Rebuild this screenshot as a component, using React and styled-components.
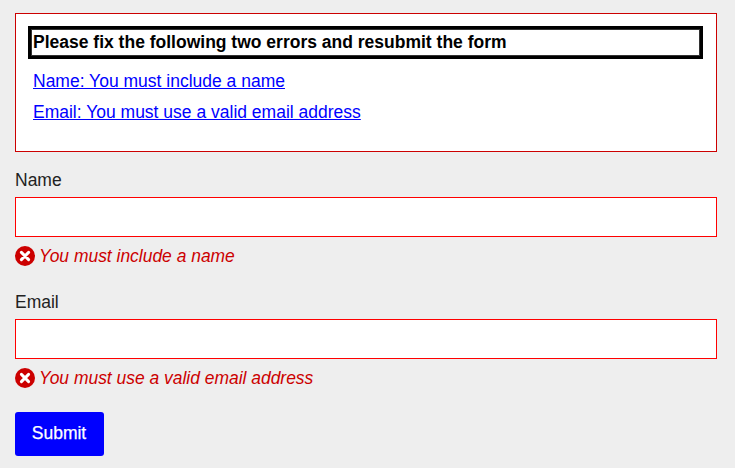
import React from "react";
import styled, { createGlobalStyle } from "styled-components";

const GlobalStyle = createGlobalStyle`
  *, *::before, *::after { box-sizing: border-box; }
  body {
    margin: 0;
    background: #fff;
    font-family: "Liberation Sans", Arial, Helvetica, sans-serif;
    font-size: 17.5px;
    line-height: 20px;
    color: #222;
  }
`;

const Page = styled.main`
  width: 735px;
  height: 468px;
  padding: 13px 18px 0 15px;
  background: #eee;
`;

const ErrorSummary = styled.section`
  height: 139px;
  padding: 12px 13px 0 12px;
  border: 1px solid #c00;
  background: #fff;
`;

const SummaryTitle = styled.h2`
  margin: 0;
  height: 33px;
  padding: 3px 2px;
  border: 3px solid #000;
  box-shadow: inset 0 0 0 1px #333;
  color: #000;
  font-size: 17.5px;
  line-height: 20px;
  white-space: nowrap;
`;

const ErrorList = styled.ul`
  display: flex;
  flex-direction: column;
  align-items: flex-start;
  gap: 11px;
  margin: 12px 0 0 5px;
  padding: 0;
  list-style: none;
`;

const ErrorLink = styled.a`
  display: block;
  color: #00f;
  text-decoration: underline;
  text-decoration-thickness: 1px;
  text-underline-offset: 1px;
  text-decoration-skip-ink: none;
  white-space: nowrap;
`;

const Field = styled.div`
  display: flex;
  flex-direction: column;
  height: 122px;
`;

const Form = styled.form`
  padding-top: 18px;
`;

const Label = styled.label`
  height: 27px;
`;

const TextInput = styled.input`
  width: 100%;
  height: 40px;
  padding: 0 8px;
  border: 1px solid #f00;
  border-radius: 0;
  background: #fff;
  font: inherit;
  outline: none;
`;

const ErrorMessage = styled.p`
  display: flex;
  gap: 4px;
  margin: 9px 0 0;
  color: #c00;
  font-size: 17.45px;
  font-style: italic;
`;

const SubmitButton = styled.button`
  display: block;
  width: 89px;
  height: 44px;
  margin-top: -2px;
  padding: 0 1px 2px 0;
  border: 0;
  border-radius: 3px;
  background: #00f;
  color: #fff;
  font: inherit;
  -webkit-text-stroke: 0.25px #fff;
`;

const ErrorIcon = () => (
  <svg width="20" height="20" viewBox="0 0 20 20" aria-hidden="true">
    <circle cx="10" cy="10" r="10" fill="#c00" />
    <path
      d="M6.4 6.4 13.6 13.6M13.6 6.4 6.4 13.6"
      stroke="#fff"
      strokeWidth="3"
      strokeLinecap="round"
    />
  </svg>
);

const fields = [
  { id: "name", label: "Name", error: "You must include a name" },
  { id: "email", label: "Email", error: "You must use a valid email address" },
];

export default function App() {
  return (
    <>
      <GlobalStyle />
      <Page>
        <ErrorSummary>
          <SummaryTitle>Please fix the following two errors and resubmit the form</SummaryTitle>
          <ErrorList>
            {fields.map(({ id, label, error }) => (
              <li key={id}>
                <ErrorLink href={`#${id}`}>{`${label}: ${error}`}</ErrorLink>
              </li>
            ))}
          </ErrorList>
        </ErrorSummary>
        <Form noValidate>
          {fields.map(({ id, label, error }) => (
            <Field key={id}>
              <Label htmlFor={id}>{label}</Label>
              <TextInput id={id} aria-invalid="true" aria-describedby={`${id}-error`} />
              <ErrorMessage id={`${id}-error`}>
                <ErrorIcon />
                <span>{error}</span>
              </ErrorMessage>
            </Field>
          ))}
          <SubmitButton type="button">Submit</SubmitButton>
        </Form>
      </Page>
    </>
  );
}
